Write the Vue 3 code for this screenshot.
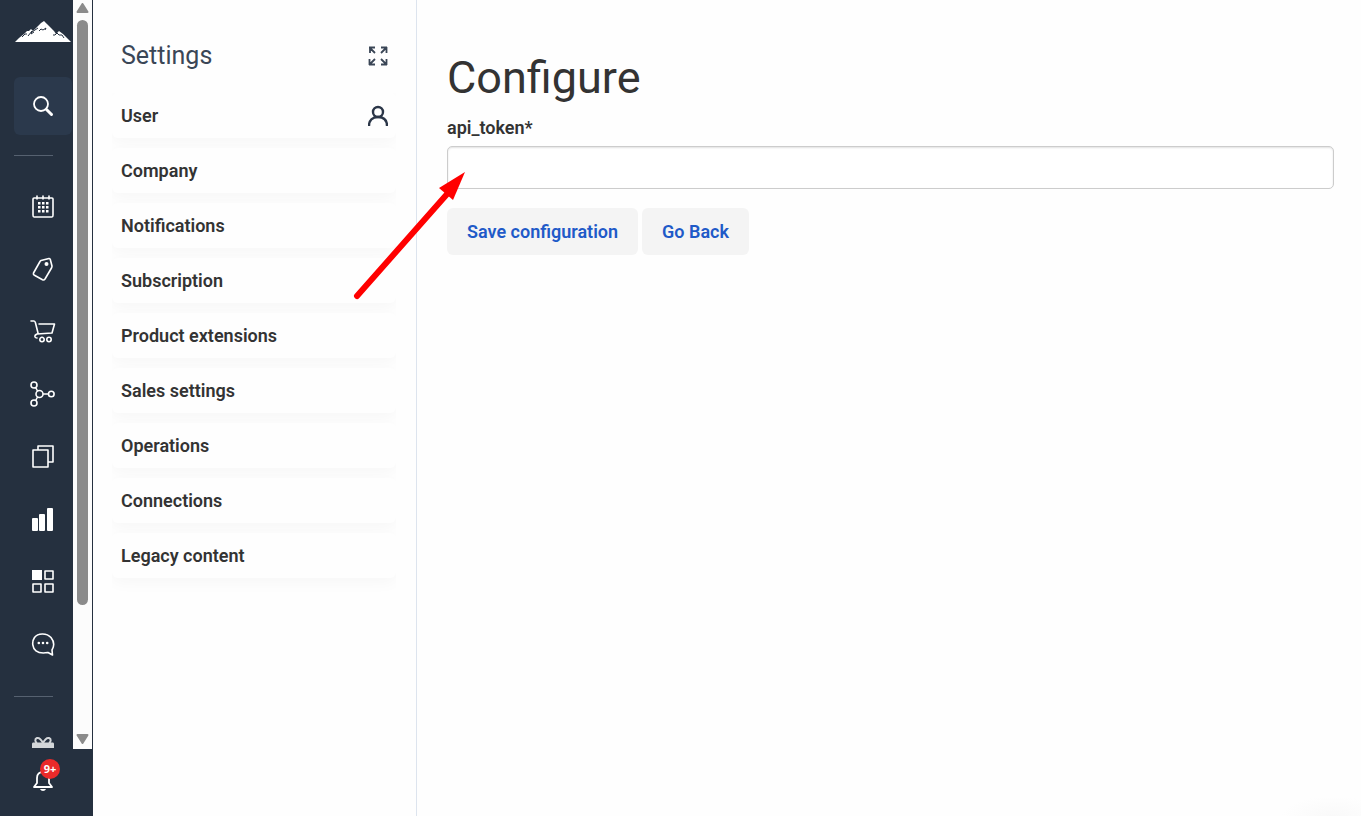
<template>
  <div class="app">
    <aside class="sidebar">
      <div class="scroll-area">
        <div class="sidebar-content">
          <a href="#" class="logo" aria-label="Home">
            <svg width="58" height="24" viewBox="0 0 58 24">
              <path fill="#fff" d="M1 22 L5 18 L10 14 L13 11 L15 11 L17 9 L19 11 L21 9 L24 6 L27 3 L30 1 L33 4 L37 8 L40 11 L42 14 L45 11 L49 14 L53 18 L57 22 Z" />
              <path fill="none" stroke="#25303f" stroke-width="1" d="M8 17 L11 14 L13 14 M14 16 L18 11 L17 14 L20 12 M18 12 L24 8 M25 11 L27 9 L29 10 L32 8 L31 10 M39 15 L41 15 L43 13 L45 15 L48 15 L50 18" />
            </svg>
          </a>
          <button class="search-btn" aria-label="Search">
            <svg width="24" height="24" viewBox="0 0 24 24" fill="none" stroke="#fff">
              <circle cx="10" cy="10" r="7" stroke-width="1.800" />
              <path d="M15.500 15.500 L20.500 20.500" stroke-width="3" stroke-linecap="round" />
            </svg>
          </button>
          <hr>
          <nav>
            <a v-for="item in navItems" :key="item.name" href="#" :aria-label="item.name">
              <svg width="26" height="26" viewBox="0 0 26 26" fill="none" stroke="#fff" stroke-width="1.6" stroke-linecap="round" stroke-linejoin="round">
                <path v-if="item.line" :d="item.line" />
                <path v-if="item.solid" :d="item.solid" fill="#fff" stroke="none" />
              </svg>
            </a>
          </nav>
          <hr>
          <a href="#" class="gift" aria-label="Rewards">
            <svg width="24" height="24" viewBox="0 0 24 24" fill="none" stroke="#d3d6d9">
              <path d="M12 7 C10 3 8 1.500 6 2 C3.500 3 4 6 6 7 M12 7 C14 3 16 1.500 18 2 C20.500 3 20 6 18 7" stroke-width="2" />
              <path d="M2 6.500 H22 Q23 6.500 23 8 V12 H1 V8 Q1 6.500 2 6.500 Z M3 13 H21 V22 H3 Z" fill="#d3d6d9" stroke="none" />
            </svg>
          </a>
        </div>
        <div class="scrollbar">
          <svg width="15" height="12" viewBox="0 0 15 12"><path d="M7.500 1 L12.500 9 H2.500 Z" fill="#8b8b8b" stroke="#8b8b8b" stroke-width="2" stroke-linejoin="round" /></svg>
          <div class="track"><div class="thumb"></div></div>
          <svg width="15" height="12" viewBox="0 0 15 12"><path d="M7.500 9 L12.500 1 H2.500 Z" fill="#8b8b8b" stroke="#8b8b8b" stroke-width="2" stroke-linejoin="round" /></svg>
        </div>
      </div>
      <div class="sidebar-footer">
        <button class="bell" aria-label="Notifications">
          <svg width="22" height="24" viewBox="0 0 22 24" fill="none" stroke="#fff" stroke-width="1.800" stroke-linejoin="round">
            <path d="M2 18 L5 14 V9 C5 5 7.500 3 11 3 C14.500 3 17 5 17 9 V14 L20 18 Z" />
            <path d="M8 20 H14 C13 22.500 9 22.500 8 20 Z" fill="#fff" stroke="none" />
          </svg>
          <span class="badge">9+</span>
        </button>
      </div>
    </aside>

    <section class="settings">
      <header>
        <h2>Settings</h2>
        <button class="expand" aria-label="Expand">
          <svg width="20" height="20" viewBox="0 0 20 20" fill="none" stroke="#3a4656" stroke-width="1.800">
            <path d="M2 7 V1 M1 1.500 H7 M2 2 L7 7 M13 1.500 H19 M18.500 1 V7 M18 2 L13 7 M1.500 13 V19 M1 18.500 H7 M2 18 L7 13 M18.500 13 V19 M19 18.500 H13 M18 18 L13 13" />
          </svg>
        </button>
      </header>
      <ul>
        <li v-for="(item, i) in menu" :key="item">
          <a href="#">
            {{ item }}
            <svg v-if="i === 0" width="20" height="22" viewBox="0 0 20 22" fill="none" stroke="#2b3648" stroke-width="2.400">
              <circle cx="10" cy="7" r="5" />
              <path d="M1 21 C1 15 4.500 12 10 12 C15.500 12 19 15 19 21" />
            </svg>
          </a>
        </li>
      </ul>
    </section>

    <main>
      <h1>Configure</h1>
      <form @submit.prevent>
        <label for="api-token">api_token*</label>
        <input id="api-token" v-model="apiToken" type="text">
        <div class="actions">
          <button type="submit">Save configuration</button>
          <button type="button">Go Back</button>
        </div>
      </form>
      <svg class="arrow" width="120" height="136" viewBox="0 0 120 136">
        <path d="M8 130 L99 27" stroke="#f00" stroke-width="6" stroke-linecap="round" />
        <path d="M116 6 L90 22 L104 34 Z" fill="#f00" />
      </svg>
      <div class="glow"></div>
    </main>
  </div>
</template>

<script setup>
import { ref } from 'vue'

const apiToken = ref('')

const menu = [
  'User',
  'Company',
  'Notifications',
  'Subscription',
  'Product extensions',
  'Sales settings',
  'Operations',
  'Connections',
  'Legacy content'
]

// line = stroked shape, solid = filled shape
const navItems = [
  {
    name: 'Calendar',
    line: 'M4 5 H22 Q23 5 23 6 V22 Q23 24 22 24 H4 Q3 24 3 22 V6 Q3 5 4 5 Z M7 3 V6 M13 3 V6 M19 3 V6',
    solid: 'M8 9h2.500v2.500h-2.500z M12 9h2.500v2.500h-2.500z M16 9h2.500v2.500h-2.500z M8 13h2.500v2.500h-2.500z M12 13h2.500v2.500h-2.500z M16 13h2.500v2.500h-2.500z M8 17h2.500v2.500h-2.500z M12 17h2.500v2.500h-2.500z M16 17h2.500v2.500h-2.500z'
  },
  {
    name: 'Products',
    line: 'M11 4.500 L19 2.500 Q20 2.300 20.300 3.500 L22 10 Q22 11 21.500 12 L15 23 Q14 24.500 12.500 23.800 L4 19 Q3 18 3.500 17 L10 5.500 Q10.500 4.700 11 4.500 Z',
    solid: 'M14.500 8a2 2 0 1 0 4 0a2 2 0 1 0 -4 0'
  },
  {
    name: 'Orders',
    line: 'M1 3 H4 Q5 3 5.500 5 L8 15 M9 6 H24.500 L22 15 L7 16 Q4.500 17 5 19 Q5.500 20 7 20 M9.800 21.500a2.200 2.200 0 1 0 4.400 0a2.200 2.200 0 1 0 -4.400 0 M16.800 21.500a2.200 2.200 0 1 0 4.400 0a2.200 2.200 0 1 0 -4.400 0'
  },
  {
    name: 'Network',
    line: 'M1 4a3 3 0 1 0 6 0a3 3 0 1 0 -6 0 M1 22a3 3 0 1 0 6 0a3 3 0 1 0 -6 0 M6 13a3.500 3.500 0 1 0 7 0a3.500 3.500 0 1 0 -7 0 M18.500 13a2.800 2.800 0 1 0 5.600 0a2.800 2.800 0 1 0 -5.600 0 M5.700 6.500 L7.500 10 M5.700 19.500 L7.500 16 M13 13 H18.500'
  },
  {
    name: 'Pages',
    line: 'M3 7 H18 V24 H3 Z M8 7 V3 H23 V19 H18'
  },
  {
    name: 'Reports',
    solid: 'M2 13 Q2 12 3 12 H7 Q8 12 8 13 V24 Q8 25 7 25 H3 Q2 25 2 24 Z M9 9 Q9 8 10 8 H14 Q15 8 15 9 V24 Q15 25 14 25 H10 Q9 25 9 24 Z M17 3 Q17 2 18 2 H22 Q23 2 23 3 V24 Q23 25 22 25 H18 Q17 25 17 24 Z'
  },
  {
    name: 'Apps',
    line: 'M15 3 H23 V11 H15 Z M3 16 H11 V24 H3 Z M15 16 H23 V24 H15 Z',
    solid: 'M2 2 H12 V12 H2 Z'
  },
  {
    name: 'Messages',
    line: 'M22.500 24 L22 19 C25 14 23 9 21 6.500 C17 2 8 1.500 4.500 6.500 C1.500 11 2.500 17 6 19.800 C10 23 15 22 18 21.500 Z',
    solid: 'M7.500 12a1.300 1.300 0 1 0 2.600 0a1.300 1.300 0 1 0 -2.600 0 M11.700 12a1.300 1.300 0 1 0 2.600 0a1.300 1.300 0 1 0 -2.600 0 M15.900 12a1.300 1.300 0 1 0 2.600 0a1.300 1.300 0 1 0 -2.600 0'
  }
]
</script>

<style>
body {
  margin: 0;
  background: #fefefe;
}
</style>

<style scoped>
* {
  box-sizing: border-box;
}

.app {
  display: flex;
  min-height: 100vh;
  font-family: Roboto, "Liberation Sans", sans-serif;
  font-size: 18px;
  color: #333;
}

a {
  color: inherit;
  text-decoration: none;
}

svg {
  display: block;
  flex-shrink: 0;
}

button {
  border: none;
  background: none;
  padding: 0;
  font: inherit;
  cursor: pointer;
}

.sidebar {
  display: flex;
  flex-direction: column;
  height: 100vh;
  background: #25303f;
}

.scroll-area {
  display: flex;
  flex: 1;
  min-height: 0;
  padding-right: 1px;
}

.sidebar-content {
  width: 73px;
  padding: 20px 1px 0 14px;
  overflow: hidden;
}

.search-btn {
  display: flex;
  align-items: center;
  justify-content: center;
  width: 100%;
  height: 58px;
  margin: 33px 0 20px;
  border-radius: 6px;
  background: #2b394c;
}

hr {
  width: 39px;
  height: 1px;
  margin: 0;
  border: none;
  background: #566170;
}

nav {
  display: flex;
  flex-direction: column;
  height: 500px;
  margin: 19px 0 21px;
}

nav a {
  display: flex;
  flex: 1;
  align-items: center;
  justify-content: center;
}

.gift {
  display: flex;
  justify-content: center;
  padding-top: 39px;
}

.scrollbar {
  display: flex;
  flex-direction: column;
  align-items: center;
  width: 19px;
  padding: 3px 0;
  background: #fcfcfc;
}

.track {
  flex: 1;
  padding-top: 5px;
}

.thumb {
  width: 11px;
  height: 82%;
  border-radius: 6px;
  background: #8b8b8b;
}

.sidebar-footer {
  height: 67px;
  padding: 20px 0 0 32px;
}

.bell {
  position: relative;
}

.badge {
  position: absolute;
  top: -10px;
  left: 8px;
  width: 20px;
  height: 20px;
  border-radius: 50%;
  background: #ea2a2a;
  color: #fff;
  font: bold 11px/20px "Open Sans", sans-serif;
  text-align: center;
}

.settings {
  width: 324px;
  padding: 40px 20px 0 19px;
  border-right: 1px solid #dde4ee;
}

.settings header {
  display: flex;
  align-items: center;
  justify-content: space-between;
  height: 31px;
  padding: 0 8px 0 9px;
}

h2 {
  margin: 0;
  font-size: 25px;
  font-weight: 400;
  color: #3a4656;
}

.settings ul {
  margin: 22px 0 0;
  padding: 0 0 20px;
  list-style: none;
  overflow: hidden;
}

.settings li {
  margin-bottom: 10px;
}

.settings li a {
  position: relative;
  display: flex;
  align-items: center;
  justify-content: space-between;
  height: 45px;
  padding: 0 8px 0 9px;
  border-radius: 6px;
  background: #fefefe;
  box-shadow: 0 5px 15px rgba(0, 0, 0, 0.03);
  font-weight: 600;
}

main {
  position: relative;
  flex: 1;
  padding: 51px 27px 0 30px;
}

h1 {
  margin: 0;
  font-size: 45px;
  font-weight: 400;
  line-height: 54px;
}

label {
  display: block;
  margin-top: 11px;
  line-height: 24px;
  font-weight: 600;
}

input {
  display: block;
  width: 100%;
  height: 43px;
  margin-top: 6px;
  padding: 0 12px;
  border: 1px solid #ccc;
  border-radius: 5px;
  background: #fff;
  box-shadow: inset 0 1px 2px rgba(0, 0, 0, 0.12);
  font: inherit;
}

.actions {
  display: flex;
  gap: 4px;
  margin-top: 19px;
}

.actions button {
  height: 47px;
  padding: 0 20px;
  border-radius: 6px;
  background: #f4f4f4;
  color: #1f5ac8;
  font-weight: 600;
}

.arrow {
  position: absolute;
  top: 166px;
  left: -68px;
  pointer-events: none;
}

.glow {
  position: absolute;
  right: 0;
  bottom: 0;
  width: 80px;
  height: 20px;
  background: radial-gradient(ellipse at 65% 100%, #f9f9f9, #fefefe 70%);
}
</style>
